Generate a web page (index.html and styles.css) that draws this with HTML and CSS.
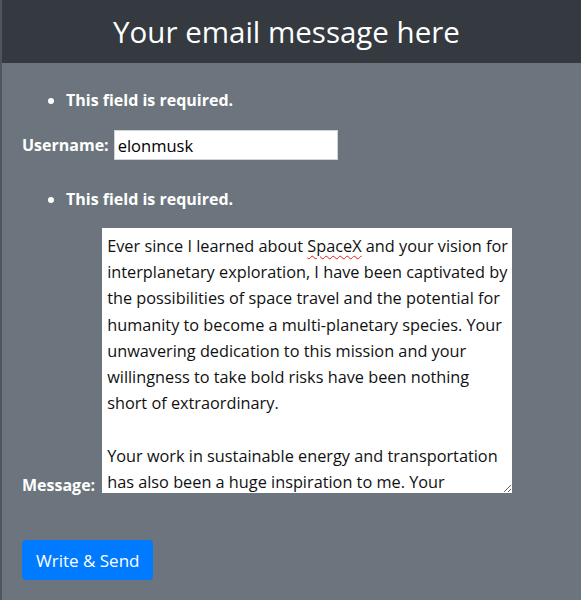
FILE: index.html
```html
<!DOCTYPE html>
<html lang="en">
<head>
<meta charset="utf-8">
<title>Email</title>
<link rel="stylesheet" href="styles.css">
</head>
<body>
<div class="page">
  <header class="topbar">
    <h1 class="title">Your email message here</h1>
  </header>
  <form class="form">
    <ul class="errors"><li>This field is required.</li></ul>
    <div class="row">
      <label class="label" for="username">Username:</label>
      <input class="input" id="username" type="text" value="elonmusk">
    </div>
    <ul class="errors"><li>This field is required.</li></ul>
    <div class="row row-bottom">
      <label class="label label-low">Message:</label>
      <div class="textarea" role="textbox" aria-multiline="true">Ever since I learned about <span class="spell">SpaceX</span> and your vision for<br>interplanetary exploration, I have been captivated by<br>the possibilities of space travel and the potential for<br>humanity to become a multi-planetary species. Your<br>unwavering dedication to this mission and your<br>willingness to take bold risks have been nothing<br>short of extraordinary.<br><br>Your work in sustainable energy and transportation<br>has also been a huge inspiration to me. Your</div>
    </div>
    <button class="btn" type="button">Write &amp; Send</button>
  </form>
</div>
</body>
</html>
```
FILE: styles.css
```css
html, body {
  margin: 0;
  padding: 0;
  background: #6c757d;
}
body {
  font-family: "Open Sans", "Noto Sans", sans-serif;
  color: #fff;
}
.page {
  min-height: 600px;
  border-left: 2px solid #4f555b;
  box-sizing: border-box;
}
.topbar {
  background: #343a40;
  height: 63px;
  display: flex;
  align-items: center;
  justify-content: center;
  padding-right: 10px;
}
.title {
  margin: 0;
  font-size: 29.5px;
  font-weight: 400;
  color: #fff;
}
.form {
  padding: 0 20px;
}
.errors {
  margin: 0;
  padding: 0 0 0 44px;
  font-weight: 700;
  font-size: 16px;
  line-height: 24px;
}
.errors:first-child {
  padding-top: 25px;
}
.row {
  display: flex;
  align-items: center;
  gap: 5px;
  margin: 18px 0 27px;
}
.row-bottom {
  align-items: flex-end;
  gap: 7px;
  margin: 17px 0 47px;
}
.label {
  font-weight: 700;
  font-size: 16px;
  line-height: 24px;
  color: #fff;
  white-space: nowrap;
}
.label-low {
  margin-bottom: -4px;
}
.input {
  width: 224px;
  height: 30px;
  box-sizing: border-box;
  border: 1px solid #ced4da;
  padding: 0 3px;
  font-family: inherit;
  font-size: 16.5px;
  color: #000;
  background: #fff;
}
.textarea {
  width: 410px;
  height: 265px;
  box-sizing: border-box;
  background: #fff;
  color: #111;
  font-size: 16.3px;
  line-height: 26.2px;
  padding: 5px 4px 0 5px;
  overflow: hidden;
  resize: both;
  white-space: nowrap;
}
.spell {
  text-decoration: underline wavy #e0201c;
  text-decoration-thickness: 1px;
  text-underline-offset: 3px;
}
.btn {
  display: block;
  background: #007bff;
  color: #fff;
  border: 0;
  border-radius: 4px;
  height: 40px;
  padding: 0 14px;
  font-family: inherit;
  font-size: 17px;
}
```
